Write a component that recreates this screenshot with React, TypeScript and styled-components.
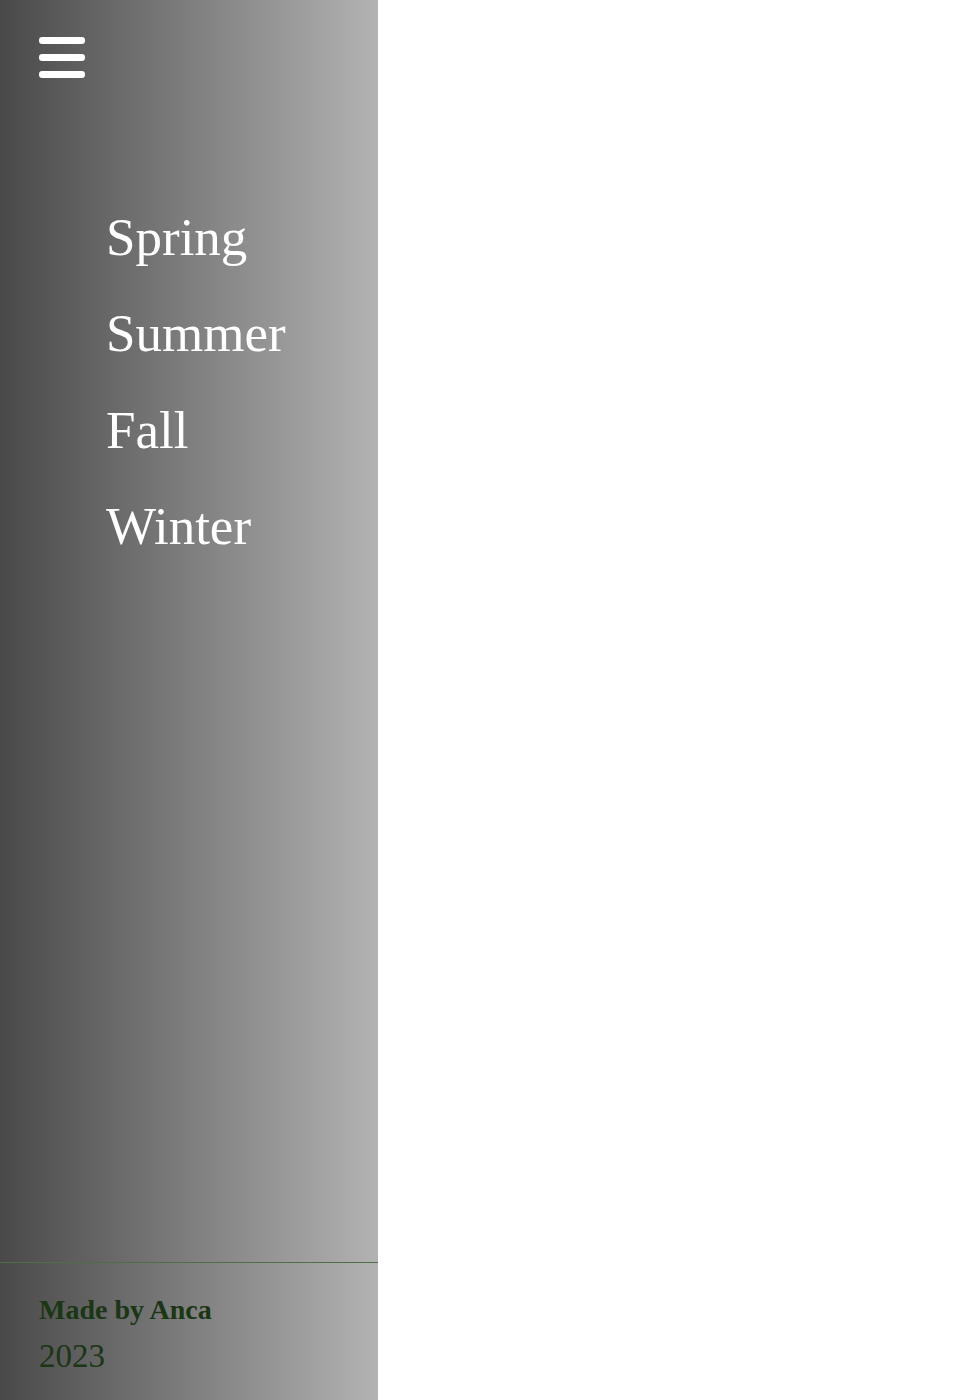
import React from 'react';
import styled, { createGlobalStyle } from 'styled-components';

const GlobalStyle = createGlobalStyle`
  html, body {
    margin: 0;
    padding: 0;
    background: #ffffff;
    font-family: "Liberation Serif", "Times New Roman", serif;
  }
`;

const Page = styled.div`
  display: flex;
  min-height: 100vh;
`;

const Sidebar = styled.aside`
  width: 378px;
  min-height: 100vh;
  display: flex;
  flex-direction: column;
  background: linear-gradient(to right, #494949, #b3b3b3);
`;

const MenuButton = styled.button`
  display: flex;
  flex-direction: column;
  gap: 10.5px;
  width: 46px;
  margin: 37px 0 0 39px;
  padding: 0;
  border: none;
  background: none;
  cursor: pointer;
`;

const Bar = styled.span`
  display: block;
  width: 46px;
  height: 6.5px;
  border-radius: 3.25px;
  background: #ffffff;
`;

const Nav = styled.ul`
  list-style: none;
  margin: 129px 0 0 0;
  padding: 0 0 0 106px;
  display: flex;
  flex-direction: column;
  gap: 36.5px;
  flex: 1;
`;

const NavItem = styled.li`
  font-size: 53px;
  line-height: 60px;
  color: #ffffff;
`;

const Footer = styled.footer`
  border-top: 1.5px solid #4e6e44;
  padding: 27px 39px 18px;
  color: #1b3615;
`;

const Credit = styled.p`
  margin: 0;
  font-size: 28px;
  font-weight: bold;
  line-height: 40px;
`;

const Year = styled.p`
  margin: 0;
  font-size: 33px;
  line-height: 52px;
`;

const Content = styled.main`
  flex: 1;
`;

const seasons = ['Spring', 'Summer', 'Fall', 'Winter'];

export default function App() {
  return (
    <>
      <GlobalStyle />
      <Page>
        <Sidebar>
          <MenuButton aria-label="menu">
            <Bar />
            <Bar />
            <Bar />
          </MenuButton>
          <Nav>
            {seasons.map(s => <NavItem key={s}>{s}</NavItem>)}
          </Nav>
          <Footer>
            <Credit>Made by Anca</Credit>
            <Year>2023</Year>
          </Footer>
        </Sidebar>
        <Content />
      </Page>
    </>
  );
}
